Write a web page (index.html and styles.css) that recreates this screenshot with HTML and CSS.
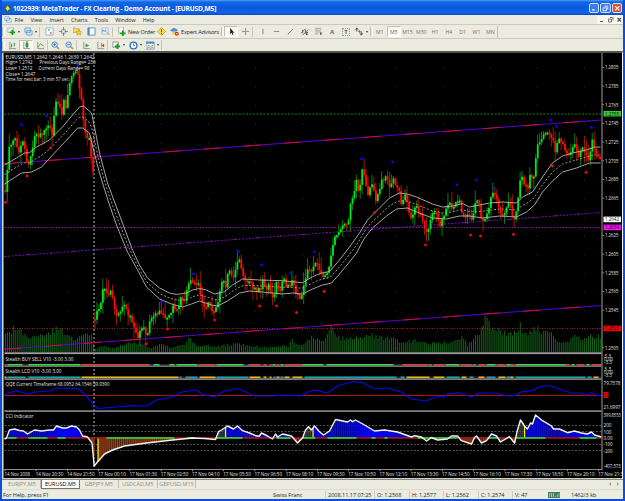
FILE: index.html
```html
<!DOCTYPE html>
<html lang="en">
<head>
    <meta charset="UTF-8">
    <meta name="viewport" content="width=device-width, initial-scale=1.0">
    <title>1022939: MetaTrader - FX Clearing - Demo Account - [EURUSD,M5]</title>
    <link rel="stylesheet" href="styles.css">
</head>
<body>
    <div class="window">
        <div class="titlebar">
            <svg class="app-icon" viewBox="0 0 9 9"><circle cx="4.5" cy="4.5" r="3.6" fill="#35603f"/><path d="M4.5 1.5 7 4.5 4.5 7 2.500 4.500z" fill="#c8d8a0"/></svg>
            <span class="title">1022939: MetaTrader - FX Clearing - Demo Account - [EURUSD,M5]</span>
            <div class="caption-btn"><svg viewBox="0 0 10 10"><path d="M2.500 7h3" stroke="#fff" stroke-width="1.6"/></svg></div>
            <div class="caption-btn"><svg viewBox="0 0 10 10"><path d="M4 2.500h4v4M2.500 4.500h4v3.500h-4z" stroke="#fff" fill="none"/></svg></div>
            <div class="caption-btn close"><svg viewBox="0 0 10 10"><path d="M2.500 2.500l5 5M7.500 2.500l-5 5" stroke="#fff" stroke-width="1.500"/></svg></div>
        </div>

        <div class="menubar">
            <svg class="menu-icon" viewBox="0 0 9 8"><path d="M1 1h5v4H1zM3 3h5v4H3z" fill="#fff" stroke="#5b9be0" stroke-width=".8"/></svg>
            <span>File</span><span>View</span><span>Insert</span><span>Charts</span><span>Tools</span><span>Window</span><span>Help</span>
            <svg class="mdi" viewBox="0 0 26 9"><g stroke="#555" fill="none"><path d="M3 6.500h3"/><path d="M13 2.500h3v3M11.500 4h3v3h-3z" stroke-width=".8"/><path d="M20.500 3l3.500 3.500M24 3l-3.500 3.500" stroke-width="1.200"/></g></svg>
        </div>

        <div class="toolbar toolbar-main">
            <i class="grip"></i>
            <div class="tool drop"><svg viewBox="0 0 10 10"><path d="M1 1h6v5H1z" fill="#fff" stroke="#6a9a9a" stroke-width=".7"/><path d="M6 3v6M3 6h6" stroke="#10a020" stroke-width="2"/></svg></div>
            <div class="tool drop"><svg viewBox="0 0 10 10"><path d="M1 1h6v5H1zM3 4h6v5H3z" fill="#cfe3fa" stroke="#6090c8" stroke-width=".8"/></svg></div>
            <i class="sep"></i>
            <div class="tool"><svg viewBox="0 0 10 10"><path d="M1 1h8v8H1z" fill="#fff" stroke="#70a0d8" stroke-width=".8"/><path d="M3 4l1.500-2L6 4z" fill="#20a030"/><path d="M5 6l1.500 2L8 6z" fill="#d04020"/></svg></div>
            <div class="tool"><svg viewBox="0 0 10 10"><circle cx="5" cy="5" r="2.500" fill="none" stroke="#888"/><path d="M5 0v10M0 5h10" stroke="#888" stroke-width="1.200"/><circle cx="5" cy="5" r="1.200" fill="#fff"/></svg></div>
            <div class="tool"><svg viewBox="0 0 10 10"><path d="M0 1h3l1 1h3v4H0z" fill="#f5d860" stroke="#b09020" stroke-width=".6"/><path d="M6.500 3l1 2 2.200.3-1.600 1.500.4 2.200-2-1-2 1 .4-2.200L3.300 5.300 5.500 5z" fill="#ffd020" stroke="#a08010" stroke-width=".5"/></svg></div>
            <div class="tool"><svg viewBox="0 0 10 10"><path d="M1 1h8v8H1z" fill="#fff" stroke="#4b86cc"/><path d="M1 1h2v8H1z" fill="#4b86cc"/></svg></div>
            <div class="tool"><svg viewBox="0 0 10 10"><path d="M1 1h7v7H1z" fill="#eef4fc" stroke="#90b0d8" stroke-width=".7"/><path d="M2 6V3l2 2 1-2 1 3" fill="none" stroke="#507ac0" stroke-width=".8"/><path d="M7 6l2.500 3" stroke="#c09030"/></svg></div>
            <i class="sep"></i>
            <div class="tool order"><svg viewBox="0 0 10 10"><path d="M2 0h5v7H2z" fill="#fff" stroke="#888" stroke-width=".7"/><path d="M6.500 4v6M3.500 7h6" stroke="#10a020" stroke-width="2"/></svg></div>
            <span class="tool-label label-order">New Order</span>
            <div class="tool"><svg viewBox="0 0 10 10"><path d="M5 .5 9.500 5 5 9.500.5 5z" fill="#ffd93c" stroke="#b88c10" stroke-width=".7"/><path d="M5 2.500v3M5 6.500v1.200" stroke="#80600a" stroke-width="1.200"/></svg></div>
            <div class="tool order"><svg viewBox="0 0 10 10"><path d="M0 4q4.500-6 9 0l-4.500 2z" fill="#4a90d8"/><path d="M2 5h5v3H2z" fill="#f3cf70"/><circle cx="7.500" cy="7.500" r="2.300" fill="#d83018"/><path d="M6.500 7.500h2" stroke="#fff"/></svg></div>
            <span class="tool-label label-expert">Expert Advisors</span>
            <i class="grip"></i>
            <div class="tool pressed"><svg viewBox="0 0 10 10"><path d="M3.500 1v7l1.700-1.500L6.200 9l1-.5-1-2.200h2z" fill="#222"/></svg></div>
            <div class="tool"><svg viewBox="0 0 10 10"><path d="M5 1v8M1 5h8" stroke="#999" stroke-width="1.300"/></svg></div>
            <i class="sep"></i>
            <div class="tool"><svg viewBox="0 0 10 10"><path d="M5.500 2v6" stroke="#777"/></svg></div>
            <div class="tool"><svg viewBox="0 0 10 10"><path d="M2 5h6" stroke="#888"/></svg></div>
            <div class="tool"><svg viewBox="0 0 10 10"><path d="M2 8l6-6" stroke="#777"/></svg></div>
            <div class="tool"><svg viewBox="0 0 10 10"><path d="M1 7l5-5M3 9l6-6M3 3v4M6 3v4" stroke="#555" stroke-width=".9"/><path d="M7 6h2M7 8h2M7 6v3" stroke="#222" stroke-width=".8"/></svg></div>
            <div class="tool"><svg viewBox="0 0 10 10"><path d="M1 1.500h7M1 3.500h7M1 5.500h7M1 7.500h4" stroke="#999" stroke-width=".9"/><path d="M7.500 6v3M7 7h2" stroke="#444"/></svg></div>
            <div class="tool letter">A</div>
            <div class="tool letter"><span class="boxed">T</span></div>
            <div class="tool drop"><svg viewBox="0 0 10 10"><path d="M2 1v4M.5 3l1.500-2 1.500 2" stroke="#444" fill="none"/><path d="M4 4l2 2" stroke="#807040" stroke-width="2"/><path d="M7 5v4M5.500 7l1.500 2 1.500-2" stroke="#444" fill="none"/></svg></div>
            <i class="grip"></i>
            <div class="tool period">M1</div>
            <div class="tool period pressed">M5</div>
            <div class="tool period">M15</div>
            <div class="tool period">M30</div>
            <div class="tool period">H1</div>
            <div class="tool period">H4</div>
            <div class="tool period">D1</div>
            <div class="tool period">W1</div>
            <div class="tool period">MN</div>
            <i class="bar-end"></i>
        </div>

        <div class="toolbar toolbar-charts">
            <i class="grip"></i>
            <div class="tool"><svg viewBox="0 0 10 10"><path d="M2 1v7.500h7M1 8.500h1" stroke="#777" stroke-width=".8" fill="none"/><path d="M4 3v4M3.500 6H4M7 2v4M7 3h1" stroke="#209030" fill="none"/></svg></div>
            <div class="tool pressed"><svg viewBox="0 0 10 10"><path d="M2 1v7.500h7" stroke="#777" stroke-width=".8" fill="none"/><path d="M5.500 0v8" stroke="#222" stroke-width=".8"/><path d="M4 2h3v4.500H4z" fill="#18a030"/></svg></div>
            <div class="tool"><svg viewBox="0 0 10 10"><path d="M2 1v7.500h7" stroke="#777" stroke-width=".8" fill="none"/><path d="M2 7l3-4 4 3" stroke="#309840" stroke-width=".9" fill="none"/></svg></div>
            <i class="sep"></i>
            <div class="tool"><svg viewBox="0 0 10 10"><path d="M6 6l3 3" stroke="#c8a030" stroke-width="1.800"/><circle cx="4" cy="4" r="3" fill="#d8ecff" stroke="#4080c8"/><path d="M4 2.500v3M2.500 4h3" stroke="#3070b8"/></svg></div>
            <div class="tool"><svg viewBox="0 0 10 10"><path d="M6 6l3 3" stroke="#c8a030" stroke-width="1.800"/><circle cx="4" cy="4" r="3" fill="#d8ecff" stroke="#4080c8"/><path d="M2.500 4h3" stroke="#3070b8"/></svg></div>
            <i class="sep wide"></i>
            <div class="tool"><svg viewBox="0 0 10 10"><path d="M2 1v7.500h7" stroke="#777" stroke-width=".8" fill="none"/><path d="M4 3l4 2-4 2z" fill="#20a030"/></svg></div>
            <div class="tool"><svg viewBox="0 0 10 10"><path d="M2 1v7.500h7M6 2v5" stroke="#777" stroke-width=".8" fill="none"/><path d="M9 3v4L6 5z" fill="#c84020"/></svg></div>
            <i class="sep wide"></i>
            <div class="tool drop"><svg viewBox="0 0 10 10"><path d="M1 1h6v6H1z" fill="#fff" stroke="#777" stroke-width=".8"/><path d="M6 3v6M3 6h6" stroke="#10a020" stroke-width="2"/></svg></div>
            <div class="tool drop"><svg viewBox="0 0 10 10"><circle cx="5" cy="5" r="3.800" fill="#fff" stroke="#2870d0" stroke-width="1.500"/><path d="M5 2.800V5h1.800" stroke="#555" stroke-width=".8" fill="none"/></svg></div>
            <div class="tool drop"><svg viewBox="0 0 10 10"><path d="M0 1h9v8H0z" fill="#fff" stroke="#5088c8" stroke-width=".8"/><path d="M0 1h9v2H0z" fill="#5088c8"/><path d="M1 6l2-1 2 1 3-1" stroke="#c05030" stroke-width=".8" fill="none"/><path d="M1 8l2-1 2 1 3-1" stroke="#30a050" stroke-width=".8" fill="none"/></svg></div>
            <i class="sep"></i>
        </div>

        <div class="chart-frame">
            <svg class="chart" id="chart" viewBox="5 53 617 425"></svg>
        </div>

        <div class="tabs">
            <div class="tab">EURJPY,M5</div>
            <div class="tab active">EURUSD,M5</div>
            <div class="tab">GBPJPY,M5</div>
            <div class="tab">USDCAD,M5</div>
            <div class="tab">GBPUSD,M15</div>
            <svg class="tab-arrows" viewBox="0 0 14 6"><path d="M4 1v4L2 3zM10 1v4l2-2z" fill="#999"/></svg>
        </div>

        <div class="statusbar">
            <span class="help">For Help, press F1</span>
            <span>Swiss Franc</span>
            <span class="cell">2008.11.17 07:25</span>
            <span class="cell">O: 1.2568</span>
            <span class="cell">H: 1.2577</span>
            <span class="cell">L: 1.2562</span>
            <span class="cell">C: 1.2574</span>
            <span class="cell">V: 47</span>
            <svg class="signal" viewBox="0 0 12 6"><path d="M0 0h12v6H0z" fill="#4f7a5a"/><path d="M1.500 1v4M3.500 1v4M5.500 1v4" stroke="#a8d060"/><path d="M7.500 5V4M9.500 5V2.500M11 5V1" stroke="#6ab0e8"/></svg>
            <span>1462/3 kb</span>
        </div>
    </div>
    <script src="chart.js"></script>
</body>
</html>
```

FILE: styles.css
```css
* {
    box-sizing: border-box;
}

body {
    margin: 0;
    overflow: hidden;
    font-family: "Open Sans", "Noto Sans", sans-serif;
    font-size: 5.6px;
    color: #222;
}

.window {
    width: 625px;
    height: 501px;
    display: flex;
    flex-direction: column;
    background: #ecebe0;
    border: solid #0a50dc;
    border-width: 0 2px 2px;
}

.titlebar {
    height: 15px;
    flex: none;
    display: flex;
    align-items: center;
    padding: 1px 0 0 1px;
    background: linear-gradient(#4aa0f4 0, #1268e8 2px, #0b58dc 8px, #0e64ec 13px, #0a44b8 15px);
    color: #fff;
}

.app-icon {
    width: 9px;
    height: 9px;
    margin-right: 1px;
}

.title {
    flex: 1;
    font-size: 6.6px;
    font-weight: bold;
    letter-spacing: -0.16px;
    white-space: pre;
}

.caption-btn {
    width: 10.5px;
    height: 10.5px;
    margin-right: 1px;
    border: 1px solid #cfe0fb;
    border-radius: 2px;
    background: #3c7cf0;
    display: flex;
}

.caption-btn.close {
    background: #dc5030;
}

.menubar {
    height: 9px;
    flex: none;
    display: flex;
    align-items: center;
    gap: 7.2px;
    padding-left: 2px;
    font-size: 5.4px;
}

.menu-icon {
    width: 8px;
    height: 7px;
    margin-right: -4.5px;
}

.mdi {
    width: 26px;
    height: 9px;
    margin-left: auto;
    background: #f8f7f2;
}

.toolbar {
    height: 13px;
    flex: none;
    display: flex;
    align-items: center;
    border-top: 1px solid #cbc9bb;
}

.toolbar-main {
    height: 14px;
}

.grip {
    width: 3px;
    height: 9px;
    border-left: 1px solid #c4c1b2;
    border-right: 1px solid #fff;
}

.sep {
    width: 3px;
    height: 10px;
    border-left: 1px solid #c8c5b6;
}

.toolbar-charts .sep {
    width: 1px;
}

.toolbar-charts .sep.wide {
    width: 3px;
}

.bar-end {
    height: 12px;
    border-right: 1px solid #c4c1b2;
}

.tool {
    width: 14px;
    height: 11px;
    flex: none;
    display: flex;
    align-items: center;
    justify-content: center;
}

.tool svg {
    width: 9px;
    height: 9px;
}

.tool.order {
    width: 13px;
}

.tool.drop {
    width: 17px;
}

.tool.drop::after {
    content: "";
    margin-left: 2px;
    border: solid transparent;
    border-width: 2px 1.5px 0;
    border-top-color: #333;
}

.tool.pressed {
    background: #f9f8f3;
    border: 1px solid #c2bfb0;
    border-right-color: #fff;
    border-bottom-color: #fff;
}

.tool-label {
    white-space: nowrap;
    font-size: 5.5px;
}

.label-order {
    width: 26px;
    letter-spacing: -0.1px;
}

.label-expert {
    width: 40px;
    letter-spacing: -0.12px;
}

.tool.letter {
    font-size: 6px;
    font-weight: bold;
    color: #666;
}

.boxed {
    padding: 0 1px;
    line-height: 6px;
    border: 1px dotted #999;
}

.tool.period {
    width: 13.8px;
    font-size: 5.2px;
    color: #777068;
}

/* chart */

.chart-frame {
    height: 428px;
    flex: none;
    padding-left: 2px;
    border-top: 2px solid #56544a;
    background: linear-gradient(90deg, #d6d3c6 1px, #77756c 1px);
    border-right: 1px solid #f4f3ec;
    border-bottom: 1px solid #d0cec0;
}

.chart {
    display: block;
    width: 618px;
    height: 425px;
    background: #000;
}

.chart text {
    font-family: "Open Sans", "Noto Sans", sans-serif;
    font-size: 5.4px;
    fill: #e0e0e0;
}

.chart .scale {
    font-size: 4.8px;
}

.chart .tag-dark {
    fill: #111;
}

/* tabs and status */

.tabs {
    height: 10px;
    flex: none;
    display: flex;
    align-items: flex-start;
    padding-left: 2px;
    border-top: 1px solid #8c8a7e;
    font-size: 5.5px;
    line-height: 8px;
    color: #8e8b7d;
}

.tab {
    width: 38.8px;
    text-align: center;
    border-right: 1px solid #bdbaab;
}

.tab:first-child {
    width: 37px;
}

.tab.active {
    width: 39px;
    height: 9px;
    background: #fff;
    color: #000;
    border: 1px solid #77756a;
    border-top: 0;
}

.tab-arrows {
    width: 14px;
    height: 6px;
    margin: 1px 2px 0 auto;
}

.statusbar {
    flex: 1;
    display: grid;
    grid-template-columns: 270px 52px 49px 35px 34px 35px 34px 36px 23px 1fr;
    align-items: center;
    padding-left: 1px;
    font-size: 5.5px;
    border-top: 1px solid #dedccf;
    white-space: nowrap;
}

.cell {
    padding-left: 2px;
    border-left: 1px solid #cfccbd;
}

.signal {
    width: 12px;
    height: 6px;
}
```

FILE: chart.js
```js
const NS = 'http://www.w3.org/2000/svg';
const chart = document.getElementById('chart');
const STEP = 1.95;

function add(tag, attrs, text) {
    const el = document.createElementNS(NS, tag);
    for (const key in attrs) el.setAttribute(key, attrs[key]);
    if (text !== undefined) el.textContent = text;
    chart.appendChild(el);
    return el;
}

function points(str) {
    return str.trim().split(/\s+/).map(p => p.split(',').map(Number));
}

// linear interpolation along a list of [x, y]
function at(pts, x) {
    if (x <= pts[0][0]) return pts[0][1];
    for (let i = 1; i < pts.length; i++) {
        if (x <= pts[i][0]) {
            const [x0, y0] = pts[i - 1];
            const [x1, y1] = pts[i];
            return y0 + (y1 - y0) * (x - x0) / (x1 - x0);
        }
    }
    return pts[pts.length - 1][1];
}

// repeatable jitter in 0..1
function rnd(n) {
    const v = Math.sin(n * 127.1 + 11.7) * 43758.5453;
    return v - Math.floor(v);
}

function line(x1, y1, x2, y2, stroke, width, dash) {
    const a = { x1, y1, x2, y2, stroke, 'stroke-width': width || 1 };
    if (dash) a['stroke-dasharray'] = dash;
    return add('line', a);
}

function rect(x, y, width, height, fill) {
    return add('rect', { x, y, width, height, fill });
}

function label(x, y, text, width, cls) {
    const a = { x, y };
    if (width) { a.textLength = width; a.lengthAdjust = 'spacingAndGlyphs'; }
    if (cls) a.class = cls;
    return add('text', a, text);
}

function curve(pts, stroke, width, dash) {
    const a = { points: pts.map(p => p.join(',')).join(' '), fill: 'none', stroke, 'stroke-width': width, 'stroke-linejoin': 'round' };
    if (dash) a['stroke-dasharray'] = dash;
    return add('polyline', a);
}

const before = points(`5,190 6,183 8,150 12,140 15,137 18,152 22,140 25,152 27,165 29,165 32,150 34,135 40,135 43,133
    48,123 52,137 55,100 58,103 62,117 63,98 66,110 68,90 71,77 73,73 77,73 78,85 81,100 83,122 86,135 89,137 91,157 93,175`);
const after = points(`94.7,319 97,308 100,307 102,288 105,286 107,297 110,291 113,302 115,317 119,312 123,302 127,315 131,317
    134,330 138,336 142,325 146,338 150,317 154,315 158,313 162,313 165,320 168,318 172,307 177,310 180,298 184,303 187,288
    190,282 194,285 198,282 201,303 204,307 208,303 213,312 217,307 219,293 222,278 225,288 228,270 233,278 237,263 239,260
    243,275 247,282 250,283 254,290 260,290 263,277 266,292 268,283 273,300 276,283 279,293 283,278 287,288 293,280 296,293
    299,300 302,293 305,280 307,267 312,270 316,262 319,272 325,277 328,267 331,255 334,238 339,230 345,225 349,217 351,195
    353,198 356,182 359,192 362,170 365,178 367,195 371,182 376,202 378,192 382,178 386,178 389,188 393,177 396,190 400,190
    401,205 404,195 407,203 410,220 415,205 420,215 423,223 426,235 429,225 433,210 437,217 440,227 443,217 448,202 453,210
    459,197 462,215 468,215 472,222 474,207 478,198 482,225 487,213 492,190 497,202 501,218 505,210 509,203 514,222 517,203
    521,172 524,183 527,190 530,173 533,182 537,142 540,143 543,133 548,133 552,137 555,153 558,137 563,145 569,157 574,145
    578,157 583,148 588,163 592,137 596,157 601,158`);

const bandTop = points(`5,165 17,158 25,153 30,152.7 37,147 50,140 63,127 73,115 80,107 84,106 92,113 94,122 100,153 108,183
    114.3,200 123,223 133,250 140,265 148,278 160,288 170,293 177,294.5 187,293 193,290 200,288.5 207,290 215,294 225,291.7
    233,285 243,279 260,280 283,280.7 303,282.7 313,276.7 322,273 330,271.5 340,260 350,247 360,233 368,220 378,210 390,198
    400,193 408,194 417,197 433,204 443,207 453,206 463,203.5 470,207 490,203 503,202 517,203 523,197 533,192 543,177
    553,163 563,156 573,153 587,150 595,147 601,147`);
const bandLow = points(`5,184 22,173 32,172 42,167 55,153 70,137 78,128 83,128 90,133 94,150 100,173 109,202 117,225 128,252
    137,268 147,287 160,299 172,304 183,307 192,304 200,301 212,305 218,306 228,301 240,293 250,291 263,292 283,294 293,293
    303,294 313,289 323,285 332,283 340,274 350,262 357,253 365,238 373,228 387,216 397,209 408,208 417,212 433,218 447,219
    460,216 470,216 483,218 500,216 517,217 527,212 535,205 543,192 553,181 563,172 577,168 590,163 601,163`);

const volume = points(`5,18 15,26 22,20 30,13 38,18 50,20 57,26 65,20 75,13 83,20 92,20 94,4 105,6 115,4 130,11 145,8 150,4
    160,8 163,10 170,4 180,7 186,7 188,15 197,7 217,6 238,9 250,7 263,5 283,7 289,6 291,14 298,7 305,9 311,16 323,12 328,19
    332,27 336,20 340,15 350,14 360,15 370,19 380,15 390,16 400,11 415,12 430,9 440,10 453,10 463,17 468,6 475,19 479,15
    482,32 485,37 490,30 495,24 507,20 518,22 520,32 523,20 532,22 537,27 543,22 553,19 557,12 567,10 573,17 583,14 588,17 600,17`);

const qqe = points(`5,395 10,392.7 17,391 28,394 35,392 50,391 57,388 78,388.5 85,394 93,403 98,408.5 117,407 130,405.7 147,406
    157,400 173,397 182,392 197,390 203,394.5 215,397 225,391 238,388.5 255,396 272,396 285,395 302,396 308,392 315,390
    328,393 338,386 353,381.5 363,382.7 375,389 388,388 402,392 412,399 427,401 435,397 445,396.7 448,394 460,392.7 472,397
    480,393 495,393 508,396 515,395.7 522,391.7 532,390.7 542,386 552,386 565,391 572,393 582,393 588,395 592,392.7 598,395.5 602,395.5`);
const cci = points(`5,439 7,438 10,430 15,429 20,430.5 24,431 28,434 35,430 42,431 50,430 54,430 57,426 63,428 67,428 72,426
    77,427 80,430 83,436 88,437 92.5,443 94.7,466 98,462 105,454 113,450 125,446 147,443 173,440 193,438 205,438.5 216,439.5
    219,431.7 222,430 228,426 234,429 238,426 243,430.7 250,433 257,436 260,436 262,433 268,436 273,439 276,434 278,437
    283,434 292,436 298,443 303,438 306,430 309,426.7 312,430 315,426 320,431.7 324,435 330,431 336,419.5 348,422 351,420
    353,421.7 356,420 365,425 375,431 385,430 398,432 412,437 415,435.7 422,437 427,441 432,437.5 438,440 448,439 452,436
    458,436 462,440.7 472,444 475,437.5 477,436 482,443 487,440.7 492,434 497,436 501,442 510,436.7 515,443 518,430 521,420
    525,426 528,429 531,423 533,424 536,415 543,420.7 552,426 554,429 560,429 568,432.7 575,431 582,433 588,434 592,432 595,435 602,437`);

// faint grid dots
for (let gx = 20.5; gx < 600; gx += 47) {
    for (let gy = 67.5; gy < 350; gy += 18.7) rect(gx, gy, 1, 1, '#262626');
}

// tick volume
for (let i = 0, x = 5.5; x < 602; x += STEP, i++) {
    const h = at(volume, x) * (0.78 + 0.3 * rnd(i));
    rect(x, 352 - h, 1, h, '#12651a');
}

// horizontal levels
line(5, 114, 602, 114, '#1d7a20', 1, '2 1.500');
line(5, 227.5, 602, 227.5, '#8a18b0', 1, '1.500 1.500');
line(5, 328.5, 602, 328.5, '#a02812', 1, '1 1.500');
line(94.5, 53, 94.5, 469, '#b8b8b8', 1, '2 2');

// regression channel, in alternating red and blue pieces
[[163.7, 120], [349.2, 305.5]].forEach(([y1, y2]) => {
    line(5, y1, 602, y2, '#6000f0', 0.9);
    line(5, y1, 602, y2, '#e80820', 0.9, '17 23');
});
line(5, 256.5, 602, 212.5, '#6a10c0', 1, '2 1.500');
line(5, 256.5, 602, 212.5, '#a01850', 1, '2 21');

function candles(path, x0, x1, seed) {
    let prev = path[0][1];
    for (let i = 0, x = x0; x <= x1; x += STEP, i++) {
        const close = at(path, x) + (rnd(seed + i) - 0.5) * 5;
        const up = close < prev;
        const top = Math.min(prev, close);
        const h = Math.max(2, Math.abs(close - prev));
        const hi = top - 1 - Math.pow(rnd(seed + i * 3 + 1), 2) * 12;
        const lo = top + h + 1 + Math.pow(rnd(seed + i * 5 + 2), 2) * 10;
        rect(x + 0.3, hi, 1, lo - hi, up ? '#0d7a14' : '#9c1808');
        rect(x, top, 1.8, h, up ? '#00e81c' : '#ff0c00');
        prev = close;
    }
}
candles(before, 5, 93, 7);
candles(after, 94.7, 601, 90);

// moving average band
curve(bandTop, '#b4b4b4', 0.9);
curve(bandLow, '#b4b4b4', 0.9);
const mid = [];
for (let x = 5; x <= 601; x += 3) mid.push([x, (at(bandTop, x) + at(bandLow, x)) / 2]);
curve(mid, '#a8a8a8', 0.9, '2 1.800');

// fractals
points(`22,124.7 47,116 78.5,64.5 162,302 194,274 239,252 262,265 291,273 315,252 362,159 393,162 457.5,185 477,180 495,188
    551,120 557,126.5 592,127.5`).forEach(([x, y]) => add('circle', { cx: x, cy: y, r: 1.4, fill: '#0808f0' }));
points(`6,202.5 27.5,176 51,148 146.5,344 168,329 215,320 260,306 277,306 297,312.5 324.5,291.5 375,212.5 426,245 471,235
    481,236 514,234.5 553,166 586.5,172.5`).forEach(([x, y]) => add('circle', { cx: x, cy: y, r: 1.4, fill: '#f80404' }));

// signal ribbons: colour key, x from, x to
const colors = { g: '#24e838', r: '#f83434', y: '#e8b818', t: '#12a8b4' };
function ribbon(str, y) {
    str.trim().split(/\s+/).forEach(s => {
        const [a, b] = s.slice(1).split('-').map(Number);
        rect(a, y, b - a, 1.5, colors[s[0]]);
    });
}
rect(5, 364, 597, 1.5, '#242424');
ribbon(`r5-7 g8-23 g29-81 r82-150 g154-160 g170-175 g177-198 r199-216 g217-244 r249-261 r264-267 r270-272 g273-276 r277-280
    g281-284 r285-303 g303-324 g327-394 r403-429 g430-432 r434-445 g446-460 r461-473 g474-476 r479-486 g487-496 r497-506
    g507-511 r511-515 g516-566 r566-570 g572-575 r577-585 g587-590 r592-602`, 364);
rect(5, 376.5, 597, 1.5, '#242424');
ribbon(`y5-7 t8-26 t29-81 y82-179 t180-182 t186-198 y200-216 t217-249 y250-261 y264-267 y270-272 t274-276 y277-280 t281-284
    y285-290 y293-303 t305-397 t401-405 y407-430 y434-445 t447-460 y462-467 t470-474 y479-485 t487-496 y499-506 t507-511
    y511-514 t516-586 t588-592 y594-599`, 376.5);

// QQE
line(5, 395.5, 602, 395.5, '#b01010', 1);
curve(qqe, '#0808f0', 1.2);

// CCI levels, histogram and line
[425.5, 431.5, 444.5, 450.5].forEach(y => line(5, y, 602, y, '#5a5a5a', 0.9, '2 1.500'));
function histo(x0, x1, up, down, base) {
    for (let x = x0; x < x1; x += STEP) {
        const y = at(cci, x);
        const top = Math.min(y, 438);
        if (base) rect(x, top, STEP, Math.abs(438 - y), base[y < 438 ? 0 : 1]);
        rect(x, top, 1.1, Math.abs(438 - y), y < 438 ? up : down);
    }
}
const shade = ['#0000a4', '#4a1e0a'];
histo(6, 94, '#0808fc', '#a04820', shade);
histo(98, 219, '#0808fc', '#9c4418', shade);
histo(219, 225, '#555', '#555');
histo(226, 305, '#0808fc', '#9c4418', shade);
histo(305, 313, '#555', '#555');
histo(314, 517, '#0808fc', '#9c4418', shade);
histo(517, 525, '#555', '#555');
histo(526, 601, '#0808fc', '#9c4418', shade);
[98, 225.5, 313, 524.5].forEach(x => rect(x, Math.min(at(cci, x), 438), 1.2, Math.abs(438 - at(cci, x)), '#f8f000'));
rect(5, 437.2, 597, 1.5, '#b81414');
ribbon('g8-17 g29-48 g58-66 g107-175 g188-195 g216-243 g277-291 g303-316 g328-357 g372-376 g385-388 g418-458 g488-498 g516-546 g580-597', 437.2);
curve(cci, '#f4f4f4', 1.4);

// panel splitters and axes
const gray = '#8c8c8c';
rect(5, 352.3, 597, 1.8, '#a0a0a0');
rect(5, 365.5, 597, 1.3, gray);
rect(5, 378.3, 597, 1.6, gray);
rect(5, 410.3, 597, 1.6, gray);
rect(5, 469, 597.5, 1, gray);
rect(602, 53, 1, 417, '#9a9a9a');

label(6, 58.7, 'EURUSD,M5  1.2642 1.2646 1.2639 1.2642', 89);
label(6, 64.2, 'High= 1.2742', 27);
label(40, 64.2, 'Previous Days Range= 230', 56);
label(6, 69.7, 'Low= 1.2512', 27);
label(39, 69.7, 'Current Days Range= 98', 51);
label(6, 75.5, 'Close= 1.2647', 30);
label(6, 81.2, 'Time for next bar: 3 min 57 sec', 63);
label(6, 360.6, 'Stealth BUY SELL V10 -3.00 3.00', 68);
label(6, 372.8, 'Stealth LCD V10 -3.00 3.00', 56);
label(6, 386.1, 'QQE Current Timeframe 68.0952 64.1546 59.9390', 104);
label(6, 418.1, 'CCI Indicator', 28);

for (let i = 0; i < 16; i++) {
    if (i === 8 || i === 14) continue;
    const y = 67.3 + i * 18.68;
    rect(603, y - 0.3, 1.5, 0.8, '#aaa');
    label(605.5, y + 2, (1.2805 - i * 0.002).toFixed(4), 13.5);
}
function tag(y, text, fill, cls) {
    rect(604, y - 2.8, 17.5, 5.6, fill);
    label(605.5, y + 2, text, 14, cls);
}
tag(113.7, '1.2755', '#34c834', 'tag-dark');
tag(219.4, '1.2642', '#fff', 'tag-dark');
tag(227.4, '1.2634', '#f010f0', 'tag-dark');
tag(328.4, '1.2525', '#f80000', 'tag-dark');

label(604.5, 358, '3.3', 7, 'scale');
label(604.5, 360.8, '0.00', 9, 'scale');
label(604.5, 363.5, '-3.3', 8, 'scale');
label(604.5, 371, '3.3', 7, 'scale');
label(604.5, 373.8, '0.00', 9, 'scale');
label(604.5, 376.8, '-3.3', 8, 'scale');
label(604, 385, '79.7578', 17);
rect(604, 392, 5, 6, '#f00000');
label(604.5, 397, '50', 4, 'tag-dark');
label(604, 409, '21.6997', 17);
label(604, 417, '399.8553', 17.3);
label(604, 427.2, '200', 8);
label(604, 433.5, '100', 8);
label(604, 439.7, '0.00', 9);
label(604, 446.2, '-100', 9);
label(604, 452.5, '-200', 9);
label(604, 468, '-407.573', 17.3);

const times = ['14 Nov 2008', '14 Nov 20:30', '14 Nov 21:50', '17 Nov 00:10', '17 Nov 01:30', '17 Nov 02:50', '17 Nov 04:10',
    '17 Nov 05:30', '17 Nov 06:50', '17 Nov 08:10', '17 Nov 09:30', '17 Nov 10:50', '17 Nov 12:10', '17 Nov 13:30',
    '17 Nov 14:50', '17 Nov 16:10', '17 Nov 17:30', '17 Nov 18:50', '17 Nov 20:10', '17 Nov 21:30'];
times.forEach((t, i) => {
    const x = 5 + i * 31.25;
    rect(x, 469, 0.8, 2.2, '#aaa');
    label(x, 475.8, t, i ? 27.5 : 25.5);
});
```
